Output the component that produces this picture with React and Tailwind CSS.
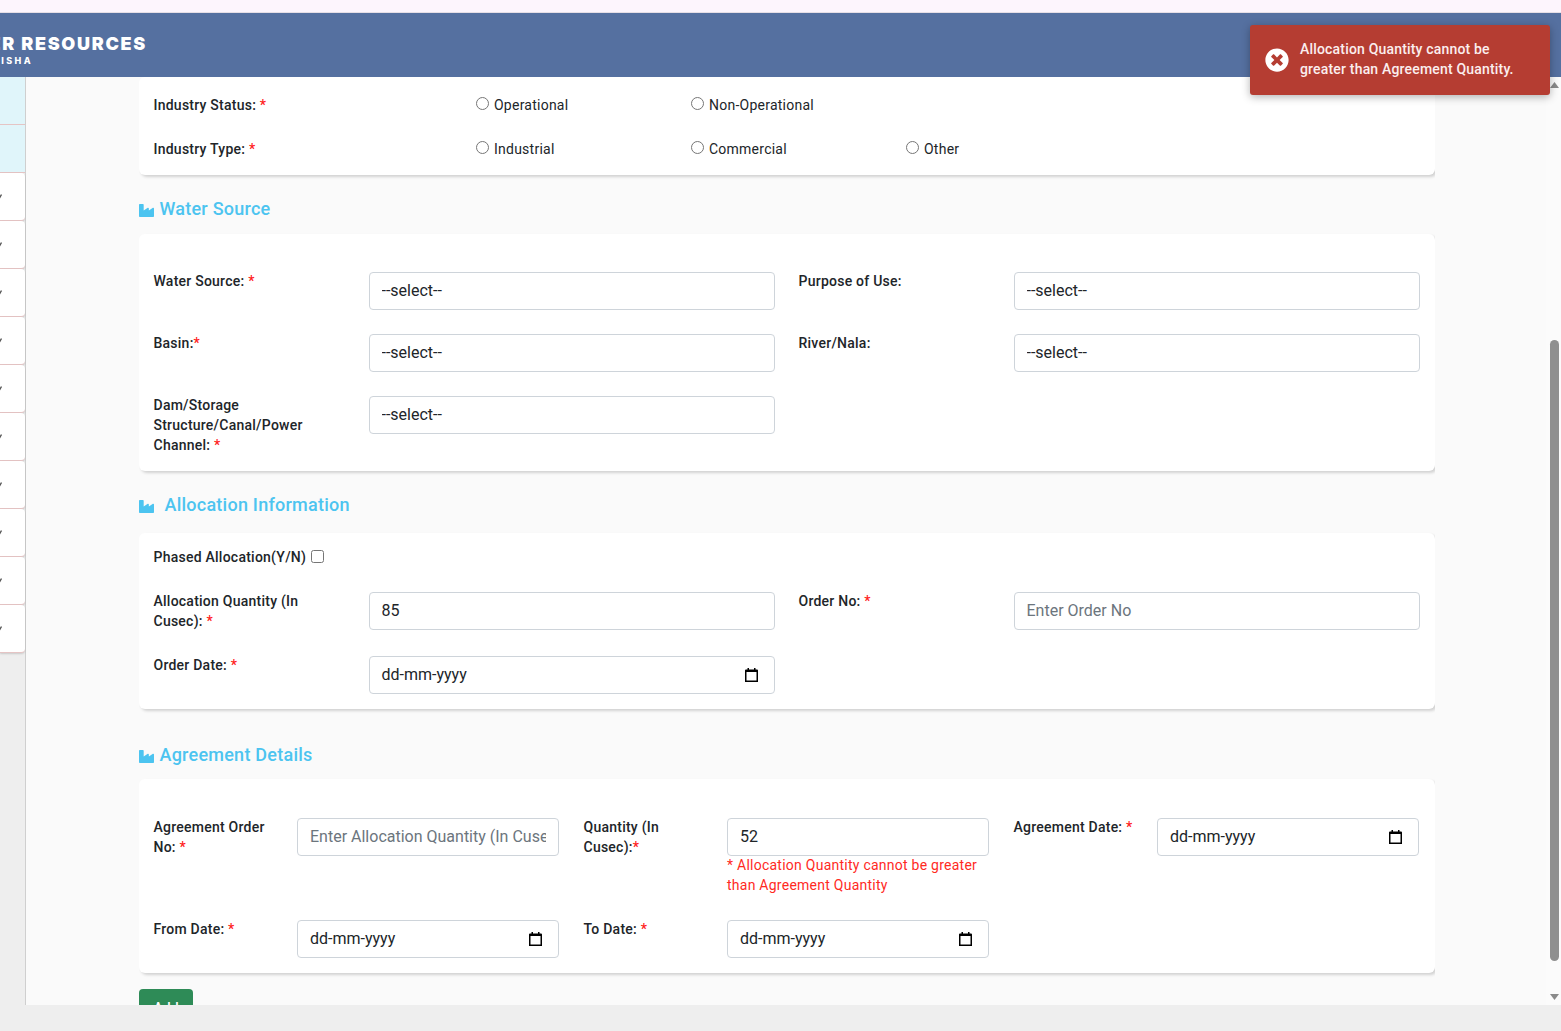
import React from "react";
import { FaIndustry, FaTimesCircle } from "react-icons/fa";

const Star = () => <span className="text-[#ff2020]">*</span>;

const Label = ({ children, req, glue }) => (
  <div className="-mt-px text-[14px] leading-[20px] font-medium tracking-[0.24px] text-[#212529]">
    {children}
    {req ? (glue ? "" : " ") : ""}
    {req ? <Star /> : null}
  </div>
);

const Select = () => (
  <select className="block h-[38px] w-full appearance-none rounded-[4px] border border-[#ced4da] bg-white px-3 text-[16px] text-[#212529] outline-none">
    <option>--select--</option>
  </select>
);

const TextInput = ({ value, placeholder }) => (
  <input
    type="text"
    readOnly
    value={value}
    placeholder={placeholder}
    className="block h-[38px] w-full rounded-[4px] border border-[#ced4da] bg-white px-3 pb-[2px] text-[16px] text-[#212529] outline-none placeholder:text-[#6c757d]"
  />
);

const CalendarIcon = () => (
  <svg width="13" height="14" viewBox="0 0 13 14" className="shrink-0">
    <path d="M2.5 0h1.5v2H2.5zM9 0h1.5v2H9z" fill="#000" />
    <path d="M1 1.5h11a1 1 0 0 1 1 1V14H0V2.5a1 1 0 0 1 1-1z" fill="#000" />
    <rect x="1.5" y="4" width="10" height="8.5" fill="#fff" />
  </svg>
);

const DateInput = () => (
  <div className="flex h-[38px] w-full items-center justify-between rounded-[4px] border border-[#ced4da] bg-white pl-3 pr-[16px] text-[16px] text-[#212529]">
    <span>dd-mm-yyyy</span>
    <CalendarIcon />
  </div>
);

const Radio = ({ label }) => (
  <label className="flex w-[215px] items-center text-[14px] leading-[20px] tracking-[0.24px] text-[#212529]">
    <input type="radio" name="x" className="m-0 mr-[5px] h-[13px] w-[13px] -translate-y-[2px]" />
    {label}
  </label>
);

const Heading = ({ children, gap }) => (
  <div className="flex h-[22px] items-center text-[18px] leading-[22px] font-medium tracking-[0.24px] text-[#4cc4f0]">
    <FaIndustry className={`h-[15px] w-[15px] translate-y-px ${gap}`} />
    {children}
  </div>
);

const Card = ({ className, children }) => (
  <div className={`rounded-[6px] bg-white pl-[14.5px] shadow-[2px_2px_3px_rgba(0,0,0,0.16)] ${className}`}>{children}</div>
);

const Chevron = () => (
  <svg width="4" height="5" viewBox="0 0 4 5" className="-ml-[2px]">
    <path d="M0 1.5 1.5 4 3.5 .5" stroke="#555" strokeWidth="1.4" fill="none" />
  </svg>
);

const Triangle = ({ down }) => (
  <svg width="9" height="6" viewBox="0 0 9 6" className="shrink-0">
    <path d={down ? "M0 0h9L4.5 6z" : "M4.5 0 9 6H0z"} fill="#8a8a8a" />
  </svg>
);

const twoCol = "grid grid-cols-[215px_406px_24px_215px_406px]";
const threeCol = "grid grid-cols-[143.5px_262px_24.5px_143.5px_262px_24.5px_143.5px_262px]";

export default function App() {
  return (
    <div className="relative flex h-[1031px] w-[1561px] flex-col overflow-hidden bg-[#eeeeee] font-['Roboto',sans-serif]">
      <div className="h-[13px] border-b border-[#e6dfe6] bg-[#fdf5fd]" />
      <header className="z-10 flex h-[64px] shrink-0 items-center bg-[#5570a0]">
        <div className="flex w-[147px] flex-col items-end overflow-hidden pt-[11px] text-white">
          <div className="font-['Inter',sans-serif] text-[18px] leading-[20px] font-black tracking-[1.7px] whitespace-nowrap">
            WATER RESOURCES
          </div>
          <div className="w-[147px] overflow-hidden">
            <div className="-ml-[17px] w-max font-['Inter',sans-serif] text-[9px] leading-[13px] font-extrabold tracking-[2.4px] whitespace-nowrap">
              ODISHA
            </div>
          </div>
        </div>
      </header>

      <div className="flex h-[928px] shrink-0">
        <aside className="flex h-full w-[26px] shrink-0 flex-col border-r border-[#cfcfcf] bg-[#eeeeee]">
          {[0, 1].map((i) => (
            <div key={i} className="h-[48px] border-b border-[#e5c4c4] bg-[#e0f5fa]" />
          ))}
          {[0, 1, 2, 3, 4, 5, 6, 7, 8, 9].map((i) => (
            <div
              key={i}
              className="flex h-[48px] items-center rounded-r-[4px] border-b border-[#e5c4c4] bg-white shadow-[0_1px_2px_rgba(0,0,0,0.15)]"
            >
              <Chevron />
            </div>
          ))}
        </aside>

        <main className="flex min-w-0 flex-1 bg-[#fafafa]">
          <div className="ml-[113px] h-full w-[1296px] shrink-0 overflow-hidden">
            <Card className="pt-[18px] pb-[16px]">
              <div className="flex">
                <div className="w-[322.5px]">
                  <div className="text-[14px] leading-[20px] font-medium tracking-[0.24px] text-[#212529]">
                    Industry Status: <Star />
                  </div>
                </div>
                <Radio label="Operational" />
                <Radio label="Non-Operational" />
              </div>
              <div className="mt-[24px] flex">
                <div className="w-[322.5px]">
                  <div className="text-[14px] leading-[20px] font-medium tracking-[0.24px] text-[#212529]">
                    Industry Type: <Star />
                  </div>
                </div>
                <Radio label="Industrial" />
                <Radio label="Commercial" />
                <Radio label="Other" />
              </div>
            </Card>

            <div className="mt-[23px]">
              <Heading gap="mr-[5.5px]">Water Source</Heading>
            </div>
            <Card className="mt-[14px] pt-[38px] pb-[16px]">
              <div className={`${twoCol} gap-y-[24px]`}>
                <Label req>Water Source:</Label>
                <Select />
                <div />
                <Label>Purpose of Use:</Label>
                <Select />

                <Label req glue>Basin:</Label>
                <Select />
                <div />
                <Label>River/Nala:</Label>
                <Select />

                <div className="w-[175px]">
                  <Label req>Dam/Storage Structure/Canal/Power Channel:</Label>
                </div>
                <Select />
              </div>
            </Card>

            <div className="mt-[23px]">
              <Heading gap="mr-[10.5px]">Allocation Information</Heading>
            </div>
            <Card className="mt-[17px] pt-[14px] pb-[15px]">
              <div className="flex h-[20px] items-center text-[14px] leading-[20px] font-medium tracking-[0.24px] text-[#212529]">
                Phased Allocation(Y/N)
                <input type="checkbox" className="m-0 ml-[5px] h-[13px] w-[13px] -translate-y-px" />
              </div>
              <div className={`${twoCol} mt-[25px]`}>
                <div className="w-[175px]">
                  <Label req>Allocation Quantity (In Cusec):</Label>
                </div>
                <TextInput value="85" />
                <div />
                <Label req>Order No:</Label>
                <TextInput placeholder="Enter Order No" />
              </div>
              <div className={`${twoCol} mt-[25px]`}>
                <Label req>Order Date:</Label>
                <DateInput />
              </div>
            </Card>

            <div className="mt-[35px]">
              <Heading gap="mr-[5.5px]">Agreement Details</Heading>
            </div>
            <Card className="mt-[13px] pt-[39px] pb-[15px]">
              <div className={threeCol}>
                <div className="w-[125px]">
                  <Label req>Agreement Order No:</Label>
                </div>
                <TextInput placeholder="Enter Allocation Quantity (In Cusec)" />
                <div />
                <div className="w-[100px]">
                  <Label req glue>Quantity (In Cusec):</Label>
                </div>
                <div>
                  <TextInput value="52" />
                  <div className="-mt-px text-[14px] leading-[20px] font-normal tracking-[0.25px] text-[#ff2a1f]">
                    * Allocation Quantity cannot be greater than Agreement Quantity
                  </div>
                </div>
                <div />
                <Label req>Agreement Date:</Label>
                <DateInput />
              </div>
              <div className={`${threeCol} mt-[25px]`}>
                <Label req>From Date:</Label>
                <DateInput />
                <div />
                <Label req>To Date:</Label>
                <DateInput />
              </div>
            </Card>

            <button className="mt-[16px] h-[38px] w-[54px] rounded-[4px] bg-[#2e8b57] text-[14px] font-medium text-white">
              Add
            </button>
          </div>

          <div className="ml-auto flex h-full w-[15px] shrink-0 flex-col items-center bg-[#fbfbfb] pt-[5px] pb-[5px] pl-[2px]">
            <Triangle />
            <div className="mt-[252px] h-[621px] w-[9px] rounded-[5px] bg-[#8f8f8f]" />
            <div className="flex-1" />
            <Triangle down />
          </div>
        </main>
      </div>

      <div className="absolute top-[25px] left-[1250px] z-20 flex h-[70px] w-[300px] items-center rounded-[3px] bg-[#b53d32] pl-[15px] text-[14px] leading-[20px] font-medium tracking-[0.18px] text-[#fbeeee] shadow-[0_2px_8px_rgba(0,0,0,0.3)]">
        <FaTimesCircle className="h-[24px] w-[24px] shrink-0 text-white" />
        <div className="ml-[11px] w-[225px] -translate-y-px">Allocation Quantity cannot be greater than Agreement Quantity.</div>
      </div>
    </div>
  );
}
